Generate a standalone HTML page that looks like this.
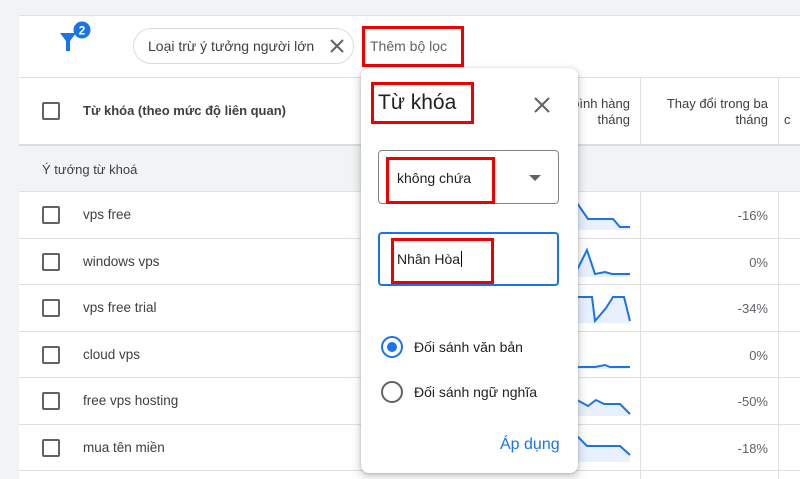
<!DOCTYPE html>
<html><head><meta charset="utf-8"><style>
*{margin:0;padding:0;box-sizing:border-box}
body{width:800px;height:479px;overflow:hidden;background:#f1f3f4;font-family:"Liberation Sans",Arial,sans-serif;color:#3c4043;position:relative}
.a{position:absolute}
.card{left:19px;top:15px;width:781px;height:464px;background:#fff;border-top:1px solid #e0e0e0}
.cb{position:absolute;left:42px;width:18px;height:18px;border:2px solid #5f6368;border-radius:2px}
.row{position:absolute;left:19px;width:781px;border-bottom:1px solid #e0e0e0;background:#fff}
.kw{position:absolute;left:83px;font-size:13.5px;color:#3c4043}
.val{position:absolute;right:32px;font-size:13px;color:#5f6368;text-align:right}
.red{position:absolute;border:3px solid #ee0000}
</style></head><body>
<div class="a card"></div>
<svg class="a" style="left:55px;top:20px" width="40" height="36" viewBox="0 0 40 36">
<path d="M5 13h16l-6 8v10h-4v-10z" fill="#1a73e8"/>
<circle cx="27" cy="10" r="8.5" fill="#1a73e8"/>
<text x="27" y="14.5" font-size="12" font-weight="bold" fill="#fff" text-anchor="middle" font-family="Liberation Sans">2</text>
</svg>
<div class="a" style="left:133px;top:28px;width:221px;height:36px;border:1px solid #dadce0;border-radius:18px;font-size:14px;line-height:34px;padding-left:14px;color:#3c4043">Loại trừ ý tưởng người lớn</div>
<svg class="a" style="left:330px;top:39px" width="14" height="14"><path d="M1 1L13 13M13 1L1 13" stroke="#5f6368" stroke-width="2"/></svg>
<div class="a" style="left:370px;top:38px;font-size:14px;color:#5f6368">Thêm bộ lọc</div>
<div class="red" style="left:362px;top:26px;width:102px;height:41px"></div>
<div class="row" style="top:77px;height:69px;border-top:1px solid #e0e0e0;border-bottom:2px solid #dadce0"></div>
<div class="cb" style="top:102px"></div>
<div class="a" style="left:83px;top:103px;font-size:13px;font-weight:bold;color:#3c4043">Từ khóa (theo mức độ liên quan)</div>
<div class="a" style="left:530px;top:96px;width:100px;font-size:13px;text-align:right;line-height:16px;color:#3c4043">Trung bình hàng<br>tháng</div>
<div class="a" style="left:645px;top:96px;width:123px;font-size:13px;text-align:right;line-height:16px;color:#3c4043">Thay đổi trong ba<br>tháng</div>
<div class="a" style="left:784px;top:112px;font-size:13px">c</div>
<div class="a" style="left:640px;top:78px;width:1px;height:67px;background:#e0e0e0"></div>
<div class="a" style="left:778px;top:78px;width:1px;height:67px;background:#e0e0e0"></div>
<div class="row" style="top:146px;height:46px;background:#f1f3f4;border-bottom:1px solid #e0e0e0"></div>
<div class="a" style="left:42px;top:162px;font-size:13px;color:#3c4043">Ý tướng từ khoá</div>
<div class="row" style="top:192px;height:47px"></div>
<div class="row" style="top:239px;height:46px"></div>
<div class="row" style="top:285px;height:47px"></div>
<div class="row" style="top:332px;height:46px"></div>
<div class="row" style="top:378px;height:47px"></div>
<div class="row" style="top:425px;height:46px"></div>
<div class="a" style="left:640px;top:192px;width:1px;height:287px;background:#e0e0e0"></div>
<div class="a" style="left:778px;top:192px;width:1px;height:287px;background:#e0e0e0"></div>
<div class="cb" style="top:206px"></div><div class="kw" style="top:207px">vps free</div><div class="val" style="top:208px">-16%</div>
<div class="cb" style="top:253px"></div><div class="kw" style="top:254px">windows vps</div><div class="val" style="top:255px">0%</div>
<div class="cb" style="top:299px"></div><div class="kw" style="top:300px">vps free trial</div><div class="val" style="top:301px">-34%</div>
<div class="cb" style="top:346px"></div><div class="kw" style="top:347px">cloud vps</div><div class="val" style="top:348px">0%</div>
<div class="cb" style="top:392px"></div><div class="kw" style="top:393px">free vps hosting</div><div class="val" style="top:394px">-50%</div>
<div class="cb" style="top:439px"></div><div class="kw" style="top:440px">mua tên miền</div><div class="val" style="top:441px">-18%</div>
<svg class="a" style="left:0;top:0" width="800" height="479">
<g fill="#e8f0fe" stroke="none">
<path d="M577 203L588 219L613 219L620 227L630 227V230H577Z"/>
<path d="M577 270L587 250L595 274L605 272L612 274L630 274V277H577Z"/>
<path d="M577 297L592 297L595 321L606 308L613 297L624 297L630 321V323H577Z"/>
<path d="M577 367L595 367L605 365L610 367L630 367V369H577Z"/>
<path d="M577 400L588 406L596 400L604 404L620 404L630 414V416H577Z"/>
<path d="M577 436L587 446L620 446L630 455V462H577Z"/>
</g>
<g fill="none" stroke="#1a73e8" stroke-width="2">
<path d="M577 203L588 219L613 219L620 227L630 227"/>
<path d="M577 270L587 250L595 274L605 272L612 274L630 274"/>
<path d="M577 297L592 297L595 321L606 308L613 297L624 297L630 321"/>
<path d="M577 367L595 367L605 365L610 367L630 367"/>
<path d="M577 400L588 406L596 400L604 404L620 404L630 414"/>
<path d="M577 436L587 446L620 446L630 455"/>
</g>
</svg>
<div class="a" style="left:361px;top:68px;width:217px;height:405px;background:#fff;border-radius:8px;box-shadow:0 1px 3px rgba(60,64,67,.3),0 4px 8px 3px rgba(60,64,67,.15)"></div>
<div class="a" style="left:378px;top:91px;font-size:21px;color:#202124">Từ khóa</div>
<svg class="a" style="left:534px;top:97px" width="16" height="16"><path d="M1 1L15 15M15 1L1 15" stroke="#5f6368" stroke-width="2"/></svg>
<div class="red" style="left:371px;top:82px;width:103px;height:42px"></div>
<div class="a" style="left:378px;top:150px;width:181px;height:54px;border:1px solid #80868b;border-radius:4px"></div>
<div class="a" style="left:397px;top:170px;font-size:14px;color:#202124">không chứa</div>
<div class="a" style="left:529px;top:175px;width:0;height:0;border-left:6px solid transparent;border-right:6px solid transparent;border-top:6px solid #5f6368"></div>
<div class="red" style="left:386px;top:157px;width:109px;height:47px"></div>
<div class="a" style="left:378px;top:232px;width:181px;height:54px;border:2px solid #1a73e8;border-radius:4px"></div>
<div class="a" style="left:397px;top:251px;font-size:14px;color:#202124">Nhân Hòa<span style="border-left:1px solid #000;margin-left:1px"></span></div>
<div class="red" style="left:391px;top:238px;width:103px;height:46px"></div>
<div class="a" style="left:381px;top:336px;width:22px;height:22px;border:2px solid #1a73e8;border-radius:50%"></div>
<div class="a" style="left:387px;top:342px;width:10px;height:10px;background:#1a73e8;border-radius:50%"></div>
<div class="a" style="left:414px;top:339px;font-size:14px;color:#202124">Đối sánh văn bản</div>
<div class="a" style="left:381px;top:381px;width:22px;height:22px;border:2px solid #5f6368;border-radius:50%"></div>
<div class="a" style="left:414px;top:384px;font-size:14px;color:#202124">Đối sánh ngữ nghĩa</div>
<div class="a" style="left:500px;top:436px;font-size:16px;color:#1a73e8">Áp dụng</div>
</body></html>
